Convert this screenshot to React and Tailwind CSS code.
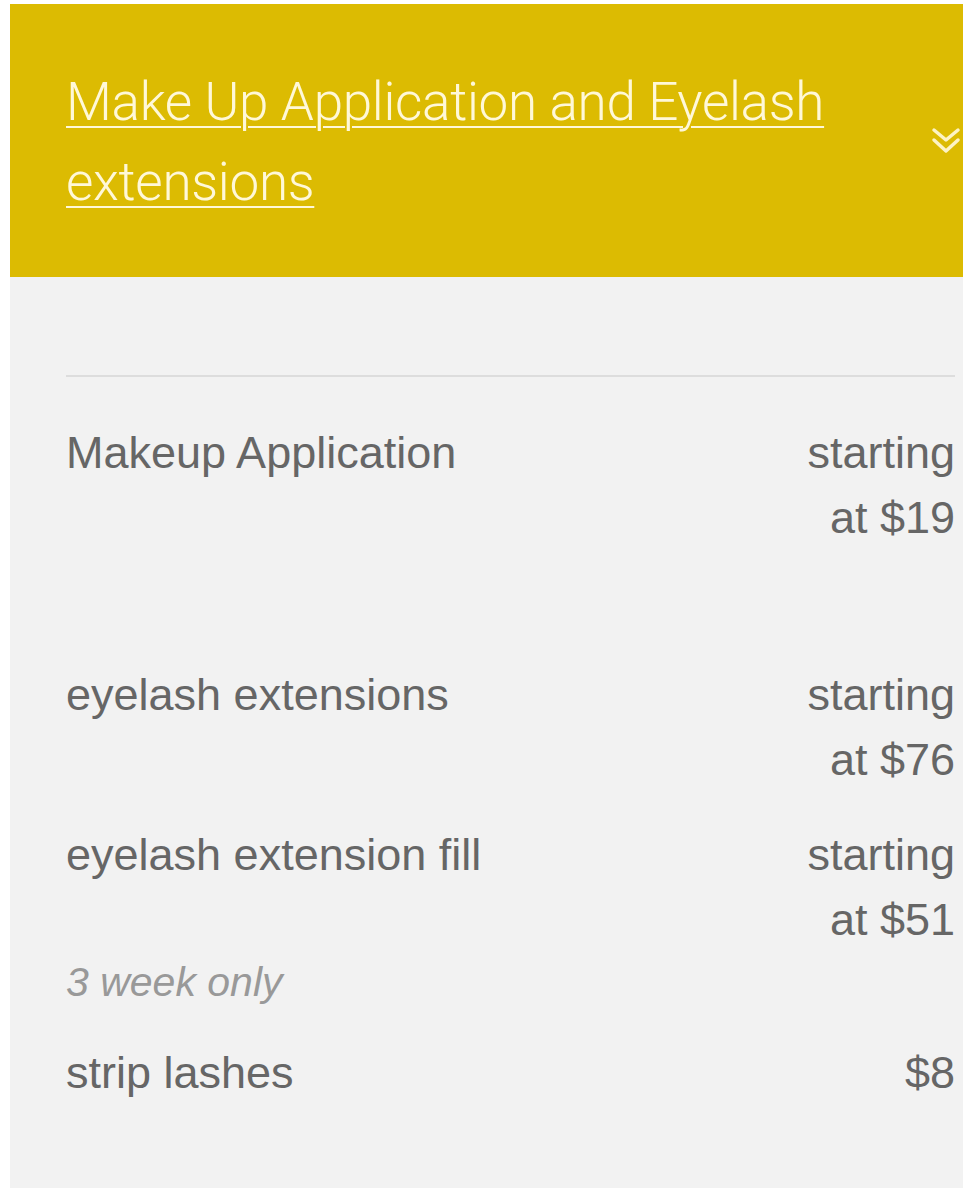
import React from "react";

function Chevron() {
  return (
    <svg width="30" height="30" viewBox="0 0 30 30" className="shrink-0 mr-[2px]" fill="none" stroke="#fdf3c4" strokeWidth="3.5" strokeLinecap="round" strokeLinejoin="round">
      <polyline points="3,3 15,13 27,3" />
      <polyline points="3,13 15,24 27,13" />
    </svg>
  );
}

function Row({ name, price, className = "" }) {
  return (
    <div className={"flex items-start justify-between " + className}>
      <div className="leading-[65px]">{name}</div>
      <div className="w-[152px] text-right leading-[65px]">{price}</div>
    </div>
  );
}

export default function App() {
  return (
    <div className="min-h-[1200px] bg-white pl-[10px] pt-[4px] overflow-hidden" style={{ fontFamily: '"Liberation Sans", Arial, sans-serif' }}>
      <div className="w-[953px]">
        <div className="bg-[#dcbb02] flex items-center pl-[56px] pt-[58px] pb-[55px] h-[273px]">
          <div className="flex-1">
            <a
              href="#"
              className="text-[#fff8d8] text-[53px] leading-[80px] font-light underline decoration-2 underline-offset-[6px] tracking-[-0.3px]"
              style={{ fontFamily: 'Roboto, "Liberation Sans", sans-serif' }}
            >
              Make Up Application and Eyelash extensions
            </a>
          </div>
          <Chevron />
        </div>
        <div className="bg-[#f2f2f2] pl-[56px] pr-[8px] pt-[98px] pb-[83px] text-[45px] text-[#666666]">
          <div className="h-[2px] bg-[#dddddd]" />
          <Row name="Makeup Application" price="starting at $19" className="mt-[43px]" />
          <Row name="eyelash extensions" price="starting at $76" className="mt-[112px]" />
          <Row name="eyelash extension fill" price="starting at $51" className="mt-[30px]" />
          <div className="mt-[5px] text-[41px] leading-[50px] italic text-[#999999]">3 week only</div>
          <Row name="strip lashes" price="$8" className="mt-[33px]" />
        </div>
      </div>
    </div>
  );
}
